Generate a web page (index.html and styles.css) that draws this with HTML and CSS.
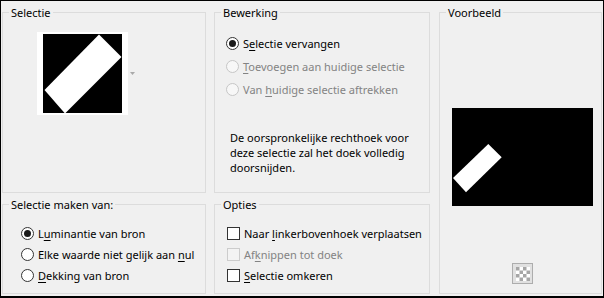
FILE: index.html
```html
<!DOCTYPE html>
<html lang="nl">
<head>
<meta charset="utf-8">
<title>Selectie</title>
<link rel="stylesheet" href="styles.css">
</head>
<body>
<div class="win">
  <fieldset class="box box-sel">
    <legend>Selectie</legend>
    <div class="picker">
      <div class="thumb">
        <svg class="thumb-img" width="79" height="79" viewBox="0 0 79 79">
          <rect width="79" height="79" fill="#000"/>
          <polygon points="56,0.5 78.5,23 22,79.5 1.5,56" fill="#fff"/>
        </svg>
      </div>
      <svg class="drop" width="5" height="3" viewBox="0 0 5 3"><polygon points="0,0 5,0 2.5,3" fill="#a9a9a9"/></svg>
    </div>
  </fieldset>

  <fieldset class="box box-bew">
    <legend>Bewerking</legend>
    <div class="opts opts-bew">
      <label class="opt"><span class="radio on"></span><span>S<u>e</u>lectie vervangen</span></label>
      <label class="opt dis"><span class="radio"></span><span><u>T</u>oevoegen aan huidige selectie</span></label>
      <label class="opt dis"><span class="radio"></span><span>Van <u>h</u>uidige selectie aftrekken</span></label>
    </div>
    <p class="note">De oorspronkelijke rechthoek voor<br>deze selectie zal het doek volledig<br>doorsnijden.</p>
  </fieldset>

  <fieldset class="box box-pre">
    <legend>Voorbeeld</legend>
    <svg class="preview" width="141" height="98" viewBox="0 0 141 98">
      <rect width="141" height="98" fill="#000"/>
      <polygon points="36.3,36 49.7,49.3 14,84.3 1,70" fill="#fff"/>
    </svg>
    <div class="chk-btn">
      <svg width="14" height="14" viewBox="0 0 14 14">
        <rect width="14" height="14" fill="#fff"/>
        <g fill="#a6a6a6">
          <rect x="0" y="0" width="3.5" height="3.5"/><rect x="7" y="0" width="3.5" height="3.5"/>
          <rect x="3.5" y="3.5" width="3.5" height="3.5"/><rect x="10.5" y="3.5" width="3.5" height="3.5"/>
          <rect x="0" y="7" width="3.5" height="3.5"/><rect x="7" y="7" width="3.5" height="3.5"/>
          <rect x="3.5" y="10.5" width="3.5" height="3.5"/><rect x="10.5" y="10.5" width="3.5" height="3.5"/>
        </g>
      </svg>
    </div>
  </fieldset>

  <fieldset class="box box-src">
    <legend>Selectie maken van:</legend>
    <div class="opts opts-low">
      <label class="opt"><span class="radio on"></span><span>L<u>u</u>minantie van bron</span></label>
      <label class="opt"><span class="radio"></span><span>Elke waarde niet gelijk aan <u>n</u>ul</span></label>
      <label class="opt"><span class="radio"></span><span><u>D</u>ekking van bron</span></label>
    </div>
  </fieldset>

  <fieldset class="box box-opt">
    <legend>Opties</legend>
    <div class="opts opts-low opts-chk">
      <label class="opt"><span class="check"></span><span>Naar <u>l</u>inkerbovenhoek verplaatsen</span></label>
      <label class="opt dis"><span class="check"></span><span>Af<u>k</u>nippen tot doek</span></label>
      <label class="opt"><span class="check"></span><span><u>S</u>electie omkeren</span></label>
    </div>
  </fieldset>
</div>
</body>
</html>
```
FILE: styles.css
```css
* { box-sizing: border-box; }

html, body {
  margin: 0;
  padding: 0;
  background: #f0f0f0;
}

body {
  font-family: "Noto Sans", "DejaVu Sans", sans-serif;
  font-size: 11px;
  color: #000;
}

.win {
  width: 604px;
  height: 298px;
  background: #f0f0f0;
  border: 1px solid #000;
  border-bottom-width: 2px;
  padding: 3px 1px 2px 1px;
  display: grid;
  grid-template-columns: 204px 216px 164px;
  grid-template-rows: 189px 98px;
  column-gap: 8px;
  row-gap: 3px;
}

.box {
  margin: 0;
  padding: 0 6px;
  min-width: 0;
  border: 1px solid #dcdcdc;
}

.box legend {
  padding: 0 2px;
  line-height: 17px;
  font-size: 11px;
}

.box-sel { grid-column: 1; grid-row: 1; }
.box-bew { grid-column: 2; grid-row: 1; }
.box-pre { grid-column: 3; grid-row: 1 / 3; margin-left: 1px; }
.box-src { grid-column: 1; grid-row: 2; }
.box-opt { grid-column: 2; grid-row: 2; }

/* Selectie picker */
.picker {
  display: flex;
  align-items: center;
  margin: 11px 0 0 28px;
}

.thumb {
  width: 91px;
  height: 83px;
  background: #fff;
  display: flex;
  align-items: center;
  justify-content: center;
}

.thumb-img { display: block; }

.drop {
  display: block;
  margin-left: 2px;
  margin-top: 0;
}

/* options */
.opts {
  display: flex;
  flex-direction: column;
}

.opts-bew {
  margin: 11px 0 0 5px;
}

.opts-bew .opt { height: 23px; }

.opts-low {
  margin: 10px 0 0 12px;
}

.opts-low .opt { height: 21px; }

.opts-chk { margin-left: 6px; }

.opt {
  display: flex;
  align-items: center;
  gap: 4px;
  line-height: 15px;
  white-space: nowrap;
}

.opt u { text-underline-offset: 2px; }

.radio {
  flex: none;
  width: 13px;
  height: 13px;
  border: 1px solid #333;
  border-radius: 50%;
  background: #fff;
  display: flex;
  align-items: center;
  justify-content: center;
}

.radio.on::after {
  content: "";
  width: 7px;
  height: 7px;
  border-radius: 50%;
  background: #1a1a1a;
}

.check {
  flex: none;
  width: 13px;
  height: 13px;
  border: 1px solid #333;
  background: #fff;
}

.opt.dis { color: #838383; }
.opt.dis .radio { border-color: #c6c6c6; background: #f7f7f7; }
.opt.dis .check { border-color: #cccccc; background: #f3f3f3; }

.note {
  margin: 29px 0 0 9px;
  line-height: 15px;
}

/* Voorbeeld */
.preview {
  display: block;
  margin: 87px 0 0 6px;
}

.chk-btn {
  width: 21px;
  height: 21px;
  margin: 57px 0 0 66px;
  border: 1px solid #adadad;
  background: #e1e1e1;
  display: flex;
  align-items: center;
  justify-content: center;
}

.chk-btn svg { display: block; }
```
